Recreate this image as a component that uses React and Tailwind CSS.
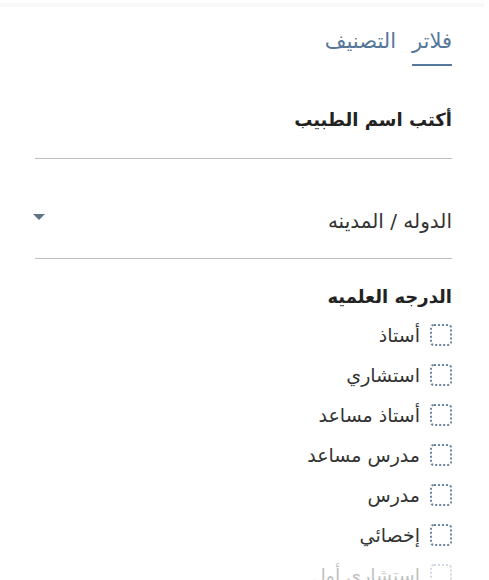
import React from "react";

const items = ["أستاذ", "استشاري", "أستاذ مساعد", "مدرس مساعد", "مدرس", "إخصائي"];

function Box() {
  return <span className="block w-[22px] h-[22px] rounded-[4px] border-2 border-dotted border-[#6a87a3] shrink-0" />;
}

export default function App() {
  return (
    <div dir="rtl" className="w-[489px] h-[580px] overflow-hidden bg-white text-[#333]" style={{ fontFamily: '"DejaVu Sans", "Noto Sans", sans-serif' }}>
      <div className="h-[3px]" />
      <div className="h-[4px] bg-[#f8f8f8] mr-[5px]" />
      <div className="pr-[37px] pl-[35px]">
        <div className="flex gap-[16px] pt-[19px]">
          <div className="flex flex-col items-center">
            <span className="text-[21px] text-[#55779a] leading-[30px]">فلاتر</span>
            <span className="block h-[2px] w-[40px] bg-[#55779a] mt-[8px]" />
          </div>
          <span className="text-[21px] text-[#55779a] leading-[30px]">التصنيف</span>
        </div>
        <div className="mt-[40px] text-[18px] font-bold text-[#222] leading-[28px]">أكتب اسم الطبيب</div>
        <div className="mt-[24px] h-px bg-[#bdbdbd]" />
        <div className="mt-[47px] flex items-center justify-between h-[30px]">
          <span className="text-[20px] leading-[30px] text-[#333]">الدوله / المدينه</span>
          <span className="w-0 h-0 border-l-[6px] border-r-[6px] border-t-[6px] border-l-transparent border-r-transparent border-t-[#5e7489] ml-[-2px] mb-[8px]" />
        </div>
        <div className="mt-[22px] h-px bg-[#bdbdbd]" />
        <div className="mt-[25px] text-[18px] font-bold text-[#222] leading-[26px]">الدرجه العلميه</div>
        <div className="mt-[5px] flex flex-col">
          {items.map((t) => (
            <label key={t} className="flex items-center gap-[10px] h-[40px]">
              <Box />
              <span className="text-[19px] leading-[26px] text-[#333]">{t}</span>
            </label>
          ))}
          <label className="flex items-center gap-[10px] h-[40px] opacity-30">
            <Box />
            <span className="text-[19px] leading-[26px] text-[#333]">استشاري أول</span>
          </label>
        </div>
      </div>
    </div>
  );
}
